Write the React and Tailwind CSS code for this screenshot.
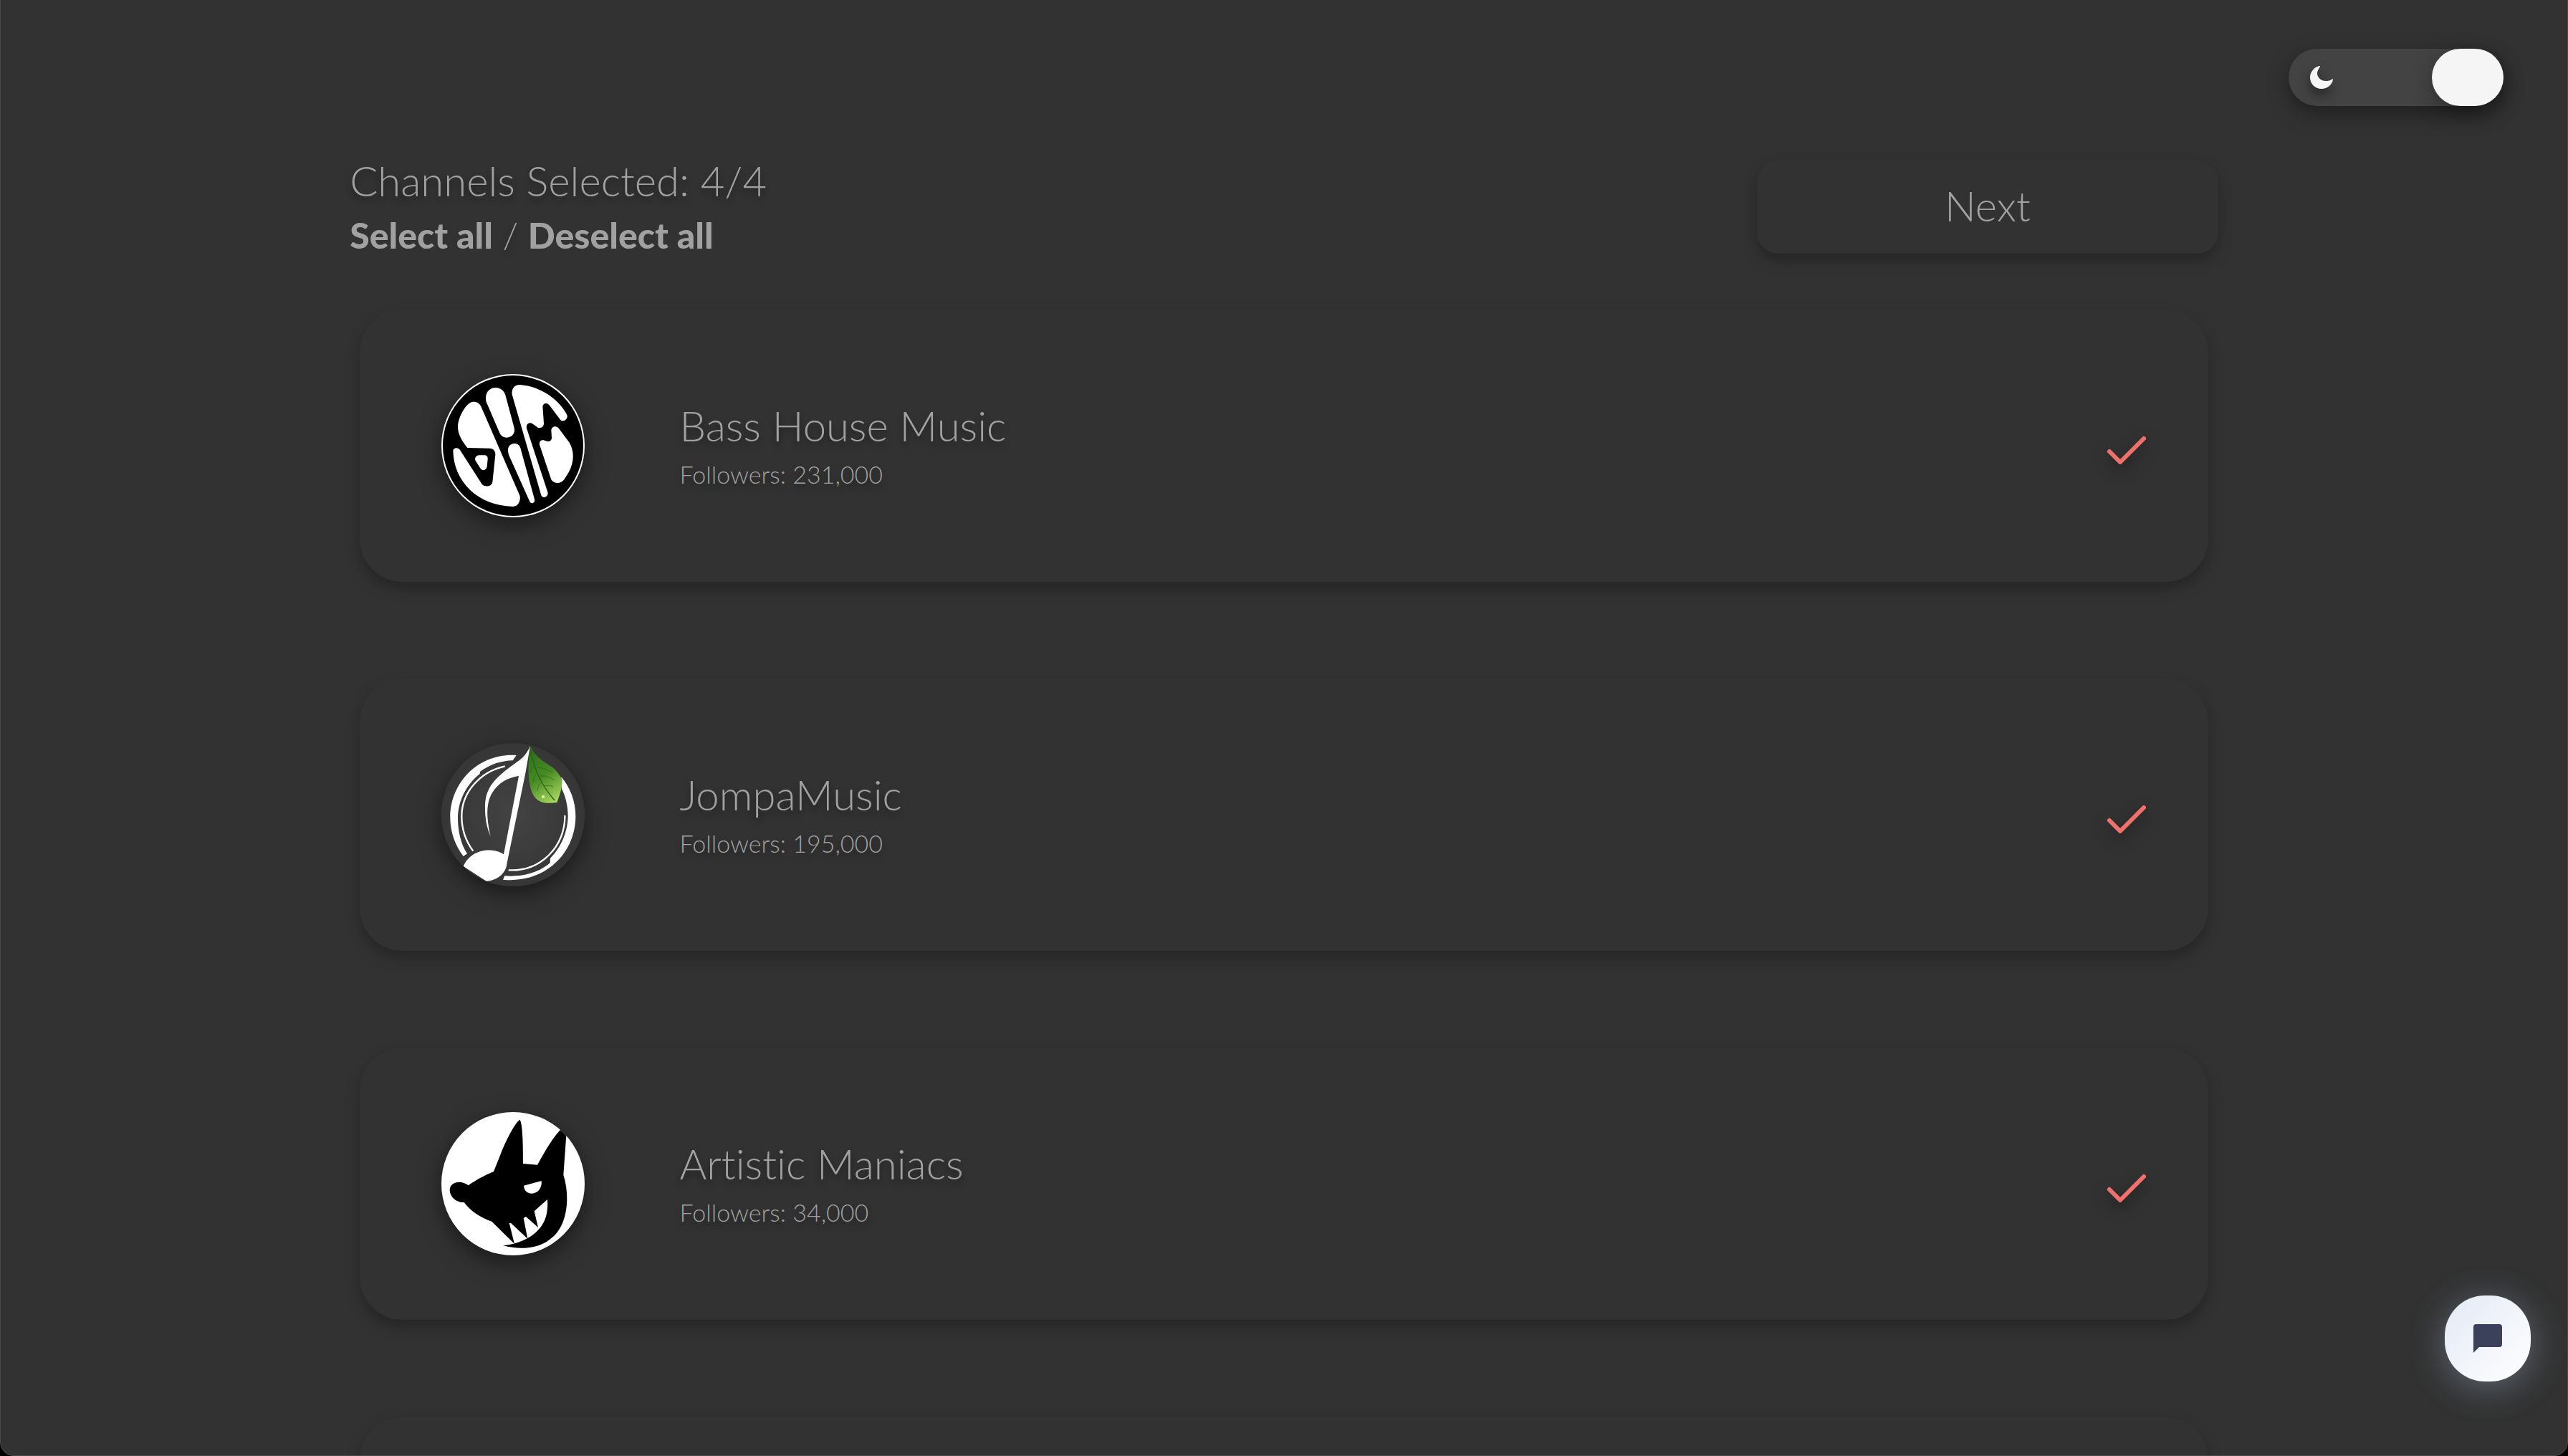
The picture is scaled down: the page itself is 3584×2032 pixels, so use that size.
import React, { useState } from "react";
import { Check } from "lucide-react";

const BassHouseLogo = () => (
  <svg viewBox="108 96 600 600" className="h-full w-full">
    <circle cx="408" cy="396" r="300" fill="#fff" />
    <circle cx="408" cy="396" r="294" fill="#000" />
    <g fill="#fff">
      <path d="M274 232C266 215 250 210 236 213C216 216 178 270 177 318C177 352 200 384 217 405L310 407C326 408 335 418 334 434L322 548C319 568 288 572 277 556L186 414C178 402 158 404 157 418C160 548 262 648 408 651C428 651 440 630 437 607Z" />
      <path d="M265 436H290C299 437 303 444 302 452L299 484C296 500 280 502 272 492L251 459C246 450 252 437 265 436Z" />
      <path d="M294 197C294 166 316 153 335 153C356 153 371 166 376 184L413 322C419 345 402 362 382 362C368 362 358 355 352 343L300 222C296 213 294 206 294 197Z" />
      <path d="M387 420C385 400 397 388 413 387C427 387 436 394 439 406L498 620C502 635 485 643 478 630L390 434Z" />
      <path d="M404 182C401 156 415 140 438 141C530 149 602 206 634 267C640 284 620 300 607 289L562 229C553 214 534 216 532 232L537 302C537 318 524 324 512 320L489 304C476 295 461 307 465 323L553 590C559 609 533 621 526 604Z" />
      <path d="M519 392C516 377 528 369 540 374L551 378C562 380 570 373 570 362L568 332C569 316 588 310 598 322L643 382C666 420 664 464 641 508L622 538C608 558 578 556 568 538Z" />
    </g>
  </svg>
);

const JompaLogo = () => (
  <svg viewBox="108 84 600 600" className="h-full w-full">
    <defs>
      <radialGradient id="jompa-disc">
        <stop offset="0" stopColor="#434343" />
        <stop offset="1" stopColor="#363636" />
      </radialGradient>
      <linearGradient id="jompa-leaf" x1="0.3" y1="0" x2="0.7" y2="1">
        <stop offset="0" stopColor="#2f701b" />
        <stop offset="0.5" stopColor="#488b24" />
        <stop offset="1" stopColor="#a4d65c" />
      </linearGradient>
      <clipPath id="jompa-clip">
        <circle cx="408" cy="384" r="300" />
      </clipPath>
    </defs>
    <circle cx="408" cy="384" r="300" fill="url(#jompa-disc)" />
    <g fill="#fff" clipPath="url(#jompa-clip)">
      <path d="M422 135C268 125 145 245 145 397C145 456 166 514 200 558L216 547C190 508 177 454 177 397C178 326 213 257 269 213L270 204C312 173 358 158 407 157Z" />
      <path d="M610 226C648 270 670 330 670 390C670 550 536 673 366 656L373 640C443 646 516 628 563 586L564 566C610 522 638 452 638 388C638 350 628 306 612 276Z" />
      <path d="M480 96C462 138 440 153 415 170C335 228 292 268 291 348C290 400 299 442 314 474C297 400 294 338 320 294C344 252 386 228 432 222L369 550C322 518 232 527 200 600L296 662C344 660 380 625 382 590L460 210Z" />
    </g>
    <g fill="none" stroke="#fff" strokeWidth="7">
      <path d="M374 181C270 204 193 290 193 390C193 446 211 496 241 536" />
      <path d="M625 387C628 515 525 623 389 616" />
    </g>
    <path
      d="M480 96C505 150 544 164 575 187C592 201 602 217 613 235C616 262 606 296 592 333C555 338 520 337 500 312C472 278 466 200 480 96Z"
      fill="url(#jompa-leaf)"
    />
    <g fill="none" stroke="#286019" strokeWidth="2">
      <path d="M481 108C496 200 530 264 582 324" strokeWidth="4" />
      <path d="M507 187C535 188 556 196 572 209M520 222C545 220 564 227 580 240M537 265C552 260 566 262 576 267M497 174C486 184 482 196 481 210M508 210C498 220 493 232 492 246M526 248C516 256 512 268 510 284" />
    </g>
    <rect x="528" y="303" width="12" height="12" rx="4" fill="#dcf5a8" />
  </svg>
);

const ManiacsLogo = () => (
  <svg viewBox="108 96 600 600" className="h-full w-full">
    <defs>
      <clipPath id="maniacs-clip">
        <circle cx="408" cy="396" r="300" />
      </clipPath>
    </defs>
    <circle cx="408" cy="396" r="300" fill="#fff" />
    <path
      clipPath="url(#maniacs-clip)"
      d="M437 128C420 135 380 210 357 270L327 345C290 360 252 381 221 403C190 378 143 388 143 423C143 450 170 476 203 474C230 512 276 540 319 554L414 648L392 560L400 562L469 626L452 540L462 534L513 579L497 511L552 462C556 520 542 560 513 590C480 625 430 648 367 655C440 675 520 668 571 622C636 570 648 450 619 359L632 180L606 170C570 210 540 262 510 317L450 312C450 240 449 150 437 128Z"
    />
    <path d="M453 404L527 384C530 412 514 436 486 437C468 437 454 424 453 404Z" fill="#fff" />
  </svg>
);

const channels = [
  { id: 1, name: "Bass House Music", followers: "231,000", Logo: BassHouseLogo },
  { id: 2, name: "JompaMusic", followers: "195,000", Logo: JompaLogo },
  { id: 3, name: "Artistic Maniacs", followers: "34,000", Logo: ManiacsLogo },
  { id: 4 },
];

const ChannelCard = ({ channel, selected, onToggle }) => {
  const { name, followers, Logo } = channel;
  return (
    <label className="relative flex h-[380px] shrink-0 cursor-pointer items-center rounded-[60px] bg-[#323232] pr-[78px] pl-[114px] shadow-[0_10px_20px_rgba(0,0,0,0.26)]">
      {Logo && (
        <>
          <input type="checkbox" className="sr-only" checked={selected} onChange={onToggle} />
          <span className="h-[200px] w-[200px] shrink-0 rounded-full shadow-[0_10px_32px_rgba(0,0,0,0.5)]">
            <Logo />
          </span>
          <span className="ml-[132px] flex flex-1 flex-col pt-3">
            <span className="text-[58px] leading-[68px] font-light">{name}</span>
            <span className="text-[34px] leading-[68px] font-light">Followers: {followers}</span>
          </span>
          {selected && (
            <Check className="mt-4 h-[72px] w-[72px] text-[#f0716c] drop-shadow-[0_8px_10px_rgba(0,0,0,0.5)]" />
          )}
        </>
      )}
    </label>
  );
};

export default function App() {
  const [selected, setSelected] = useState([1, 2, 3, 4]);
  const [dark, setDark] = useState(true);

  const toggle = (id) =>
    setSelected(selected.includes(id) ? selected.filter((s) => s !== id) : [...selected, id]);

  return (
    <div className="h-screen overflow-hidden bg-black">
      <div className="flex h-full flex-col overflow-hidden rounded-b-[20px] border-x border-b border-[#4a4a4a] bg-[#323232] font-['Lato',sans-serif] text-[#a1a1a1] [font-variant-ligatures:none] [text-shadow:0_6px_10px_rgba(0,0,0,0.4)]">
        <div className="flex shrink-0 justify-end pt-[68px] pr-[89px]">
          <label className="relative flex h-20 w-[300px] cursor-pointer items-center justify-between rounded-full bg-[#434343] pl-[30px] shadow-[0_10px_30px_rgba(0,0,0,0.4)]">
            <input
              type="checkbox"
              aria-label="Dark mode"
              className="sr-only"
              checked={dark}
              onChange={() => setDark(!dark)}
            />
            <svg viewBox="0 0 32 32" className="h-8 w-8 drop-shadow-[0_8px_8px_rgba(0,0,0,0.5)]">
              <path
                d="M13 0C5 2 0 9 0 16C0 25 7 32 16 32C24 32 31 26 32 19C32 18 31 18 30 19C27 21 24 21 22 21C15 21 10 16 10 10C10 7 12 4 14 1C14 0 14 0 13 0Z"
                fill="#f5f5f5"
              />
            </svg>
            <span className="h-20 w-[100px] rounded-full bg-[#f5f5f5] shadow-[0_10px_30px_rgba(0,0,0,0.3)]" />
          </label>
        </div>

        <div className="mx-auto mt-[66px] flex w-[72.8%] shrink-0 items-start justify-between">
          <div>
            <h1 className="text-[58px] leading-[76px] font-light">
              Channels Selected: {selected.length}/{channels.length}
            </h1>
            <div className="text-[50px] leading-[76px] font-light">
              <button
                type="button"
                className="cursor-pointer font-black"
                onClick={() => setSelected(channels.map((c) => c.id))}
              >
                Select all
              </button>
              {" / "}
              <button type="button" className="cursor-pointer font-black" onClick={() => setSelected([])}>
                Deselect all
              </button>
            </div>
          </div>
          <button
            type="button"
            className="mt-[10px] h-[130px] w-[644px] cursor-pointer rounded-[30px] bg-[#323232] pb-1.5 text-[58px] font-light shadow-[0_10px_20px_rgba(0,0,0,0.26)]"
          >
            Next
          </button>
        </div>

        <div className="mx-auto mt-[66px] flex w-[72%] flex-col gap-[135px]">
          {channels.map((channel) => (
            <ChannelCard
              key={channel.id}
              channel={channel}
              selected={selected.includes(channel.id)}
              onToggle={() => toggle(channel.id)}
            />
          ))}
        </div>
      </div>

      <button
        type="button"
        aria-label="Open chat"
        className="fixed right-[52px] bottom-[104px] flex h-[120px] w-[120px] cursor-pointer items-center justify-center rounded-[56px] bg-linear-to-br from-[#e3eaf5] to-white shadow-[0_8px_48px_rgba(150,170,195,0.45)]"
      >
        <svg viewBox="0 0 40 40" className="h-10 w-10">
          <path d="M4 0H36Q40 0 40 4V28Q40 32 36 32H8L0 40V4Q0 0 4 0Z" fill="#3c415b" />
        </svg>
      </button>
    </div>
  );
}
